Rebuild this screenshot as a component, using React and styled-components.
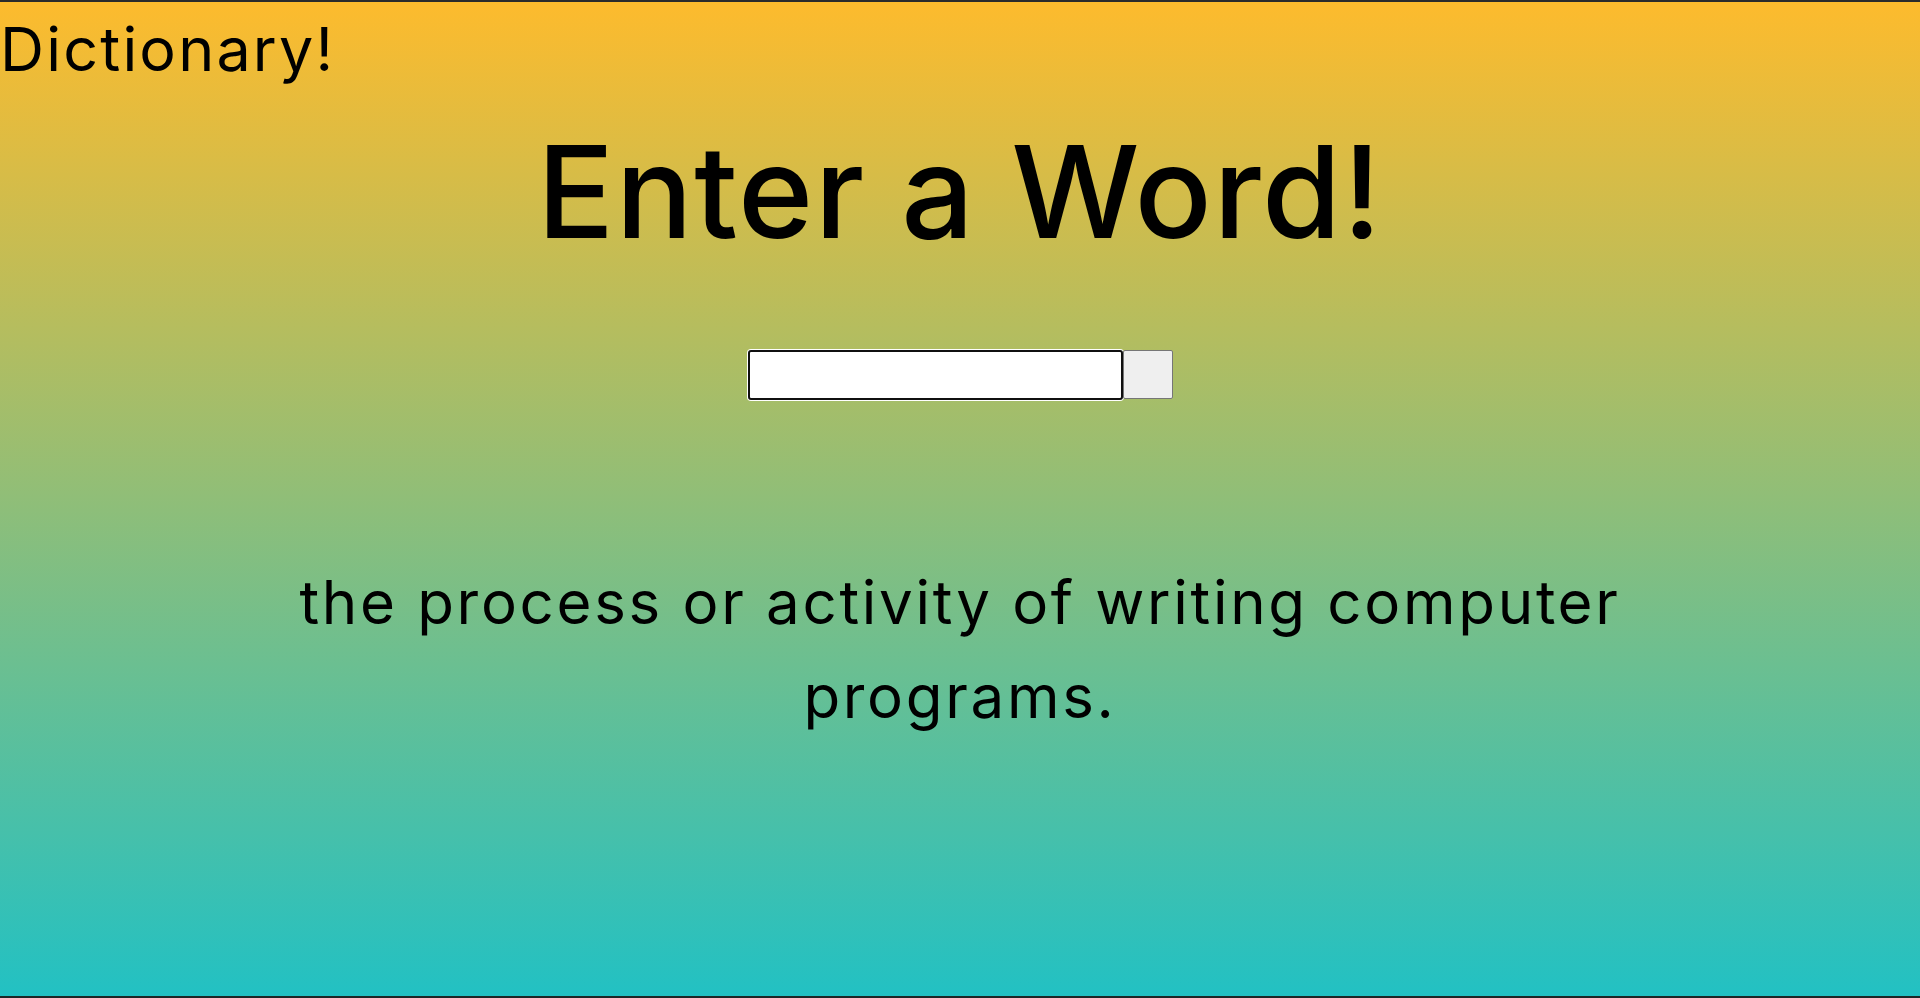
import React, { useState } from "react";
import styled, { createGlobalStyle } from "styled-components";

const GlobalStyle = createGlobalStyle`
  html, body {
    margin: 0;
    padding: 0;
  }
  body {
    font-family: "Inter", "Noto Sans", sans-serif;
    color: #000;
  }
`;

const Page = styled.div`
  box-sizing: border-box;
  min-height: 100vh;
  border-top: 2px solid #2b2b2b;
  border-bottom: 2px solid #1c2727;
  background: linear-gradient(180deg, #fdbb2d 0%, #22c1c3 100%);
  display: flex;
  flex-direction: column;
`;

const Brand = styled.header`
  font-size: 61px;
  font-weight: 400;
  line-height: 94px;
  letter-spacing: 2.2px;
`;

const Main = styled.main`
  display: flex;
  flex-direction: column;
  align-items: center;
  text-align: center;
`;

const Heading = styled.h1`
  margin: 0;
  font-size: 128px;
  font-weight: 500;
  line-height: 192px;
  letter-spacing: 1.5px;
`;

const SearchForm = styled.form`
  display: flex;
  margin-top: 62px;
  height: 50px;
`;

const SearchInput = styled.input`
  box-sizing: border-box;
  width: 375px;
  height: 50px;
  border: 2px solid #101010;
  border-radius: 3px;
  box-shadow: 0 0 0 1px #ffffff;
  background: #fff;
  font-size: 20px;
  padding: 0 8px;
  outline: none;
`;

const SearchButton = styled.button`
  box-sizing: border-box;
  width: 50px;
  height: 49px;
  background: #efefef;
  border: 1px solid #767676;
  border-radius: 2px;
  cursor: pointer;
`;

const Definition = styled.p`
  margin: 155px 0 0;
  max-width: 1450px;
  font-size: 60px;
  font-weight: 400;
  line-height: 94px;
  letter-spacing: 2.7px;
`;

const App = () => {
  const [word, setWord] = useState("");

  return (
    <>
      <GlobalStyle />
      <Page>
        <Brand>Dictionary!</Brand>
        <Main>
          <Heading>Enter a Word!</Heading>
          <SearchForm onSubmit={(e) => e.preventDefault()}>
            <SearchInput
              type="text"
              value={word}
              onChange={(e) => setWord(e.target.value)}
            />
            <SearchButton type="submit" />
          </SearchForm>
          <Definition>
            the process or activity of writing computer programs.
          </Definition>
        </Main>
      </Page>
    </>
  );
};

export default App;
